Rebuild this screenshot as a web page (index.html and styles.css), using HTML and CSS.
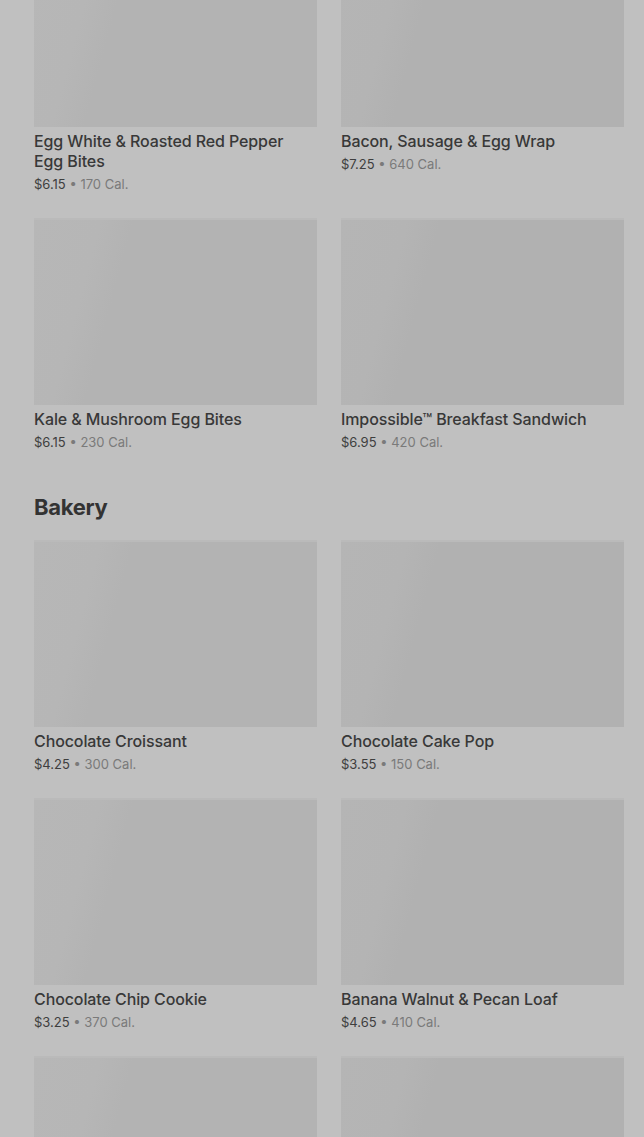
FILE: index.html
```html
<!DOCTYPE html>
<html lang="en">
<head>
<meta charset="utf-8">
<title>Menu</title>
<link rel="stylesheet" href="styles.css">
</head>
<body>
<main class="menu">
  <section class="section first">
    <div class="grid">
      <div class="card">
        <div class="thumb"></div>
        <div class="name">Egg White &amp; Roasted Red Pepper Egg Bites</div>
        <div class="meta"><span class="price">$6.15</span> <span class="cal">• 170 Cal.</span></div>
      </div>
      <div class="card">
        <div class="thumb"></div>
        <div class="name">Bacon, Sausage &amp; Egg Wrap</div>
        <div class="meta"><span class="price">$7.25</span> <span class="cal">• 640 Cal.</span></div>
      </div>
      <div class="card">
        <div class="thumb"></div>
        <div class="name">Kale &amp; Mushroom Egg Bites</div>
        <div class="meta"><span class="price">$6.15</span> <span class="cal">• 230 Cal.</span></div>
      </div>
      <div class="card">
        <div class="thumb"></div>
        <div class="name">Impossible™ Breakfast Sandwich</div>
        <div class="meta"><span class="price">$6.95</span> <span class="cal">• 420 Cal.</span></div>
      </div>
    </div>
  </section>
  <section class="section">
    <h2 class="heading">Bakery</h2>
    <div class="grid">
      <div class="card">
        <div class="thumb"></div>
        <div class="name">Chocolate Croissant</div>
        <div class="meta"><span class="price">$4.25</span> <span class="cal">• 300 Cal.</span></div>
      </div>
      <div class="card">
        <div class="thumb"></div>
        <div class="name">Chocolate Cake Pop</div>
        <div class="meta"><span class="price">$3.55</span> <span class="cal">• 150 Cal.</span></div>
      </div>
      <div class="card">
        <div class="thumb"></div>
        <div class="name">Chocolate Chip Cookie</div>
        <div class="meta"><span class="price">$3.25</span> <span class="cal">• 370 Cal.</span></div>
      </div>
      <div class="card">
        <div class="thumb"></div>
        <div class="name">Banana Walnut &amp; Pecan Loaf</div>
        <div class="meta"><span class="price">$4.65</span> <span class="cal">• 410 Cal.</span></div>
      </div>
      <div class="card">
        <div class="thumb"></div>
      </div>
      <div class="card">
        <div class="thumb"></div>
      </div>
    </div>
  </section>
</main>
</body>
</html>
```
FILE: styles.css
```css
html, body {
  margin: 0;
  padding: 0;
  background: #c0c0c0;
  overflow: hidden;
}
body {
  font-family: Inter, "Noto Sans", sans-serif;
  color: #383838;
}
.menu {
  padding: 0 20px 0 34px;
}
.section.first {
  margin-top: -60px;
}
.grid {
  display: grid;
  grid-template-columns: 283px 283px;
  column-gap: 24px;
  row-gap: 24px;
}
.card {
  display: flex;
  flex-direction: column;
}
.thumb {
  height: 187px;
  background: linear-gradient(105deg, #b7b7b7 0%, #b6b6b6 20%, #b3b3b3 30%, #b3b3b3 100%);
  border-top: 2px solid #bababa;
  box-sizing: border-box;
  margin-bottom: 4px;
}
.card:nth-child(even) .thumb {
  background: linear-gradient(105deg, #b5b5b5 0%, #b4b4b4 20%, #b1b1b1 30%, #b1b1b1 100%);
}
.name {
  padding-right: 16px;
  font-size: 16px;
  line-height: 20px;
  font-weight: 500;
  color: #383838;
  letter-spacing: -0.1px;
}
.meta {
  margin-top: 3px;
  font-size: 13px;
  line-height: 20px;
}
.price {
  color: #3e3e3e;
}
.cal {
  color: #7a7a7a;
}
.section + .section {
  margin-top: 41px;
}
.heading {
  margin: 0 0 19px;
  font-size: 22px;
  line-height: 28px;
  font-weight: 700;
  color: #333333;
  letter-spacing: -0.3px;
}
```
